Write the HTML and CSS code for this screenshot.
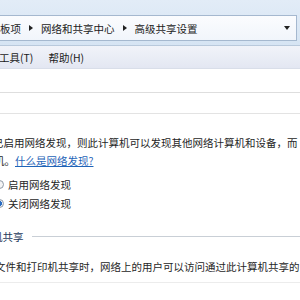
FILE: index.html
```html
<!DOCTYPE html>
<html lang="zh-CN">
<head>
    <meta charset="UTF-8">
    <title>高级共享设置</title>
    <link rel="stylesheet" href="styles.css">
</head>
<body>
    <div class="chrome">
        <div class="address">
            <span class="crumb first">板项</span>
            <span class="sep"></span>
            <span class="crumb">网络和共享中心</span>
            <span class="sep"></span>
            <span class="crumb">高级共享设置</span>
            <span class="drop"></span>
        </div>
    </div>
    <div class="menubar">
        <span class="menu first">工具(T)</span>
        <span class="menu">帮助(H)</span>
    </div>
    <div class="content">
        <div class="band"></div>
        <p class="text first-line">已启用网络发现，则此计算机可以发现其他网络计算机和设备，而</p>
        <p class="text second-line">机。<a href="#">什么是网络发现?</a></p>
        <label class="radio"><span class="dot"></span>启用网络发现</label>
        <label class="radio"><span class="dot on"></span>关闭网络发现</label>
        <div class="heading"><span>机共享</span></div>
        <p class="text share-line">文件和打印机共享时，网络上的用户可以访问通过此计算机共享的</p>
        <div class="rule"></div>
    </div>
</body>
</html>
```

FILE: styles.css
```css
body {
    margin: 0;
    width: 300px;
    height: 300px;
    overflow: hidden;
    background: #fff;
    font-family: "Noto Sans CJK SC", "DejaVu Sans", sans-serif;
    font-size: 10.5px;
    color: #262626;
}

.chrome {
    padding: 15px 3px 4px 0;
    background: linear-gradient(#e2ecf7, #d6e4f3);
    border-bottom: 1px solid #b9c9dc;
}

.address {
    display: flex;
    align-items: center;
    height: 24px;
    padding-left: 1px;
    margin-left: -3px;
    border: 1px solid #a5b8cf;
    background: linear-gradient(#fbfcfe, #f1f5fb);
    color: #1b1b1b;
}

.crumb.first {
    margin-left: 1px;
}

.sep {
    width: 0;
    height: 0;
    margin: 0 8px;
    border-top: 3px solid transparent;
    border-bottom: 3px solid transparent;
    border-left: 4px solid #222;
}

.drop {
    width: 0;
    height: 0;
    margin-left: auto;
    margin-right: 6px;
    border-left: 3px solid transparent;
    border-right: 3px solid transparent;
    border-top: 4px solid #222;
}

.menubar {
    display: flex;
    align-items: center;
    height: 22px;
    background: linear-gradient(#f1f3f9, #e3e7f2);
    border-bottom: 1px solid #d9dee9;
    color: #1b1b1b;
}

.menu.first {
    margin-left: -1px;
    margin-right: 15px;
}

.content {
    padding-top: 23px;
}

.band {
    height: 20px;
    border-top: 1px solid #dedede;
    border-bottom: 1px solid #e3e3e3;
    margin-bottom: 20px;
}

.text {
    margin: 0;
    line-height: 18px;
    white-space: nowrap;
}

.first-line {
    margin-left: -7px;
}

.second-line {
    margin-left: -6px;
}

.second-line a {
    color: #1f64b8;
}

.radio {
    display: flex;
    align-items: center;
    height: 19px;
    margin-left: -5px;
}

.radio:first-of-type {
    margin-top: 5px;
}

.dot {
    width: 7px;
    height: 7px;
    margin-right: 4px;
    border: 1px solid #8f9aa6;
    border-radius: 50%;
    background: #f4f4f4;
}

.dot.on {
    background: radial-gradient(circle, #2a6cc2 45%, #e9eef5 55%);
}

.heading {
    display: flex;
    align-items: center;
    margin: 16px 0 0 -8px;
    color: #1e3a5c;
}

.heading::after {
    content: "";
    flex: 1;
    margin-left: 8px;
    border-top: 1px solid #c9cfd6;
}

.share-line {
    margin: 14px 0 0 -5px;
}

.rule {
    margin-top: 6px;
    border-top: 1px solid #ececec;
}
```
